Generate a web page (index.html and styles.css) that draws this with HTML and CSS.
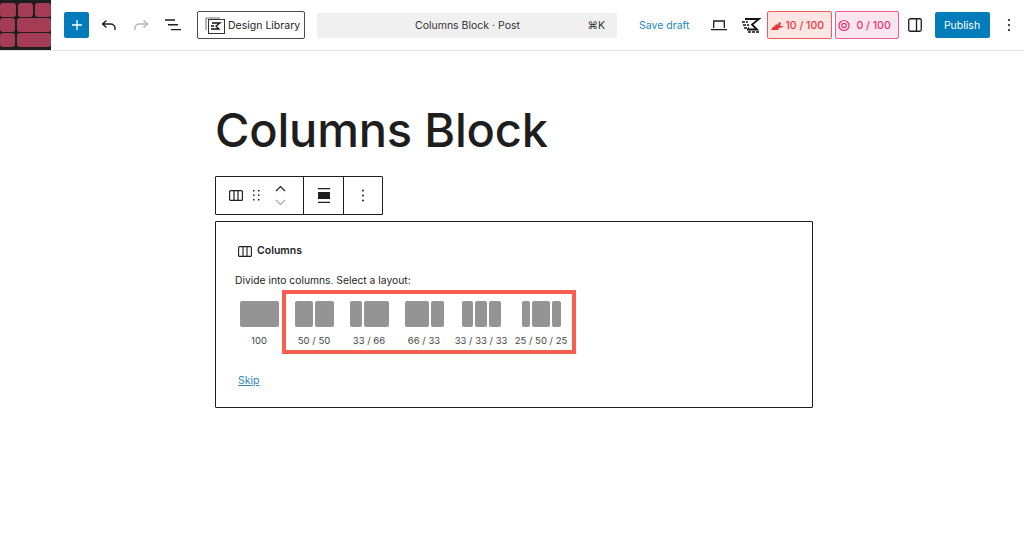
FILE: index.html
```html
<!DOCTYPE html>
<html lang="en">
<head>
  <meta charset="UTF-8">
  <meta name="viewport" content="width=device-width, initial-scale=1.0">
  <title>Columns Block</title>
  <link rel="stylesheet" href="styles.css">
</head>
<body>

  <!-- Top Bar -->
  <header class="topbar">
    <div class="logo">
      <div class="brick-row"><span class="brick"></span><span class="brick"></span><span class="brick"></span></div>
      <div class="brick-row"><span class="brick"></span><span class="brick wide"></span></div>
      <div class="brick-row"><span class="brick"></span><span class="brick wide"></span></div>
    </div>

    <div class="bar-left">
      <button class="add-btn">
        <svg width="12" height="12" viewBox="0 0 12 12"><path d="M6 1v10M1 6h10" stroke="#fff" stroke-width="1.300" fill="none"/></svg>
      </button>
      <svg class="undo" width="18" height="14" viewBox="0 0 18 14"><path d="M6.500 2.500 2.500 6l4 3.500M2.500 6h8c2.500 0 4.500 1.800 4.500 4.300v1.700" stroke="#1e1e1e" stroke-width="1.400" fill="none"/></svg>
      <svg class="redo" width="18" height="14" viewBox="0 0 18 14"><path d="M11.500 2.500 15.500 6l-4 3.500M15.500 6h-8C5 6 3 7.800 3 10.300v1.700" stroke="#b5b5b5" stroke-width="1.400" fill="none"/></svg>
      <svg class="list-view" width="16" height="12" viewBox="0 0 16 12"><path d="M0 1h10M3 5.800h10M6 10.600h10" stroke="#1e1e1e" stroke-width="1.400" fill="none"/></svg>
      <button class="library-btn">
        <svg width="20" height="17" viewBox="0 0 20 17">
          <path d="M1 13V1h14" stroke="#6b6b6b" stroke-width="1" fill="none"/>
          <rect x="3.500" y="2.500" width="16" height="14" fill="#fff" stroke="#333" stroke-width="1"/>
          <path d="M7 6h8l-4 3 3 3H8M6 9h3M6 12h2" stroke="#111" stroke-width="1.300" fill="none"/>
        </svg>
        Design Library
      </button>
    </div>

    <div class="command-bar">
      <span class="command-title">Columns Block · Post</span>
      <span class="command-key">⌘K</span>
    </div>

    <div class="bar-right">
      <a class="save-draft" href="#">Save draft</a>
      <svg class="laptop" width="16" height="11" viewBox="0 0 16 11"><path d="M2.700 8V1h10.600v7M0 9.700h16" stroke="#1e1e1e" stroke-width="1.300" fill="none"/></svg>
      <svg class="speed" width="19" height="17" viewBox="0 0 19 17">
        <path d="M3 2h14l-7 5.500 5 5H5" stroke="#111" stroke-width="1.800" fill="none"/>
        <path d="M0 5h6M1 8h6M2 11h5M6 15h11" stroke="#111" stroke-width="1.500" stroke-dasharray="3 1" fill="none"/>
      </svg>
      <div class="score red">
        <svg width="12" height="9" viewBox="0 0 12 9"><path d="M0 9l2-3 2-1 1-2 2 1 1-3 2 1-1 3h3v1l-4 1-1 2z" fill="#e8363c"/></svg>
        <span>10 / 100</span>
      </div>
      <div class="score pink">
        <svg width="12" height="13" viewBox="0 0 12 13"><circle cx="6" cy="6.500" r="5" stroke="#e8306f" stroke-width="1.200" fill="none"/><circle cx="6" cy="6.500" r="2.200" stroke="#e8306f" stroke-width="1.200" fill="none"/></svg>
        <span>0 / 100</span>
      </div>
      <svg class="sidebar-icon" width="14" height="14" viewBox="0 0 14 14"><rect x="0.750" y="0.750" width="12.500" height="12.500" rx="1.500" stroke="#1e1e1e" stroke-width="1.300" fill="none"/><path d="M8.500 1v12" stroke="#1e1e1e" stroke-width="1.300"/></svg>
      <button class="publish-btn">Publish</button>
      <svg class="more" width="4" height="14" viewBox="0 0 4 14"><circle cx="2" cy="2" r="1.100" fill="#1e1e1e"/><circle cx="2" cy="7" r="1.100" fill="#1e1e1e"/><circle cx="2" cy="12" r="1.100" fill="#1e1e1e"/></svg>
    </div>
  </header>

  <!-- Editor -->
  <main class="editor">
    <h1 class="post-title">Columns Block</h1>

    <div class="block-toolbar">
      <div class="tool-group first">
        <svg width="14" height="11" viewBox="0 0 14 11"><rect x="0.600" y="0.600" width="12.800" height="9.800" rx="1" stroke="#1e1e1e" stroke-width="1.200" fill="none"/><path d="M5 1v9M9 1v9" stroke="#1e1e1e" stroke-width="1.200"/></svg>
        <svg class="drag" width="7" height="11" viewBox="0 0 7 11"><g fill="#1e1e1e"><rect x="0" y="0" width="1.500" height="1.500"/><rect x="5" y="0" width="1.500" height="1.500"/><rect x="0" y="4.500" width="1.500" height="1.500"/><rect x="5" y="4.500" width="1.500" height="1.500"/><rect x="0" y="9" width="1.500" height="1.500"/><rect x="5" y="9" width="1.500" height="1.500"/></g></svg>
        <div class="movers">
          <svg width="11" height="7" viewBox="0 0 11 7"><path d="M1 6l4.500-4.500L10 6" stroke="#1e1e1e" stroke-width="1.200" fill="none"/></svg>
          <svg width="11" height="7" viewBox="0 0 11 7"><path d="M1 1l4.500 4.500L10 1" stroke="#a8a8a8" stroke-width="1.200" fill="none"/></svg>
        </div>
      </div>
      <div class="tool-group align">
        <svg width="12" height="15" viewBox="0 0 12 15"><path d="M0 .7h12M0 14.300h12" stroke="#1e1e1e" stroke-width="1.300"/><rect x="0" y="4" width="12" height="7" fill="#1e1e1e"/></svg>
      </div>
      <div class="tool-group options">
        <svg width="4" height="13" viewBox="0 0 4 13"><circle cx="2" cy="1.500" r="1" fill="#1e1e1e"/><circle cx="2" cy="6.500" r="1" fill="#1e1e1e"/><circle cx="2" cy="11.500" r="1" fill="#1e1e1e"/></svg>
      </div>
    </div>

    <section class="placeholder">
      <div class="placeholder-label">
        <svg width="14" height="11" viewBox="0 0 14 11"><rect x="0.600" y="0.600" width="12.800" height="9.800" rx="1" stroke="#1e1e1e" stroke-width="1.100" fill="none"/><path d="M5 1v9M9 1v9" stroke="#1e1e1e" stroke-width="1.100"/></svg>
        Columns
      </div>
      <p class="placeholder-text">Divide into columns. Select a layout:</p>

      <div class="variations">
        <div class="variation first-var">
          <div class="thumb"><span style="flex: 100"></span></div>
          <div class="var-label">100</div>
        </div>
        <div class="highlight">
          <div class="variation">
            <div class="thumb"><span style="flex: 50"></span><span style="flex: 50"></span></div>
            <div class="var-label">50 / 50</div>
          </div>
          <div class="variation">
            <div class="thumb"><span style="flex: 33"></span><span style="flex: 66"></span></div>
            <div class="var-label">33 / 66</div>
          </div>
          <div class="variation">
            <div class="thumb"><span style="flex: 66"></span><span style="flex: 33"></span></div>
            <div class="var-label">66 / 33</div>
          </div>
          <div class="variation">
            <div class="thumb"><span style="flex: 33"></span><span style="flex: 33"></span><span style="flex: 33"></span></div>
            <div class="var-label">33 / 33 / 33</div>
          </div>
          <div class="variation">
            <div class="thumb"><span style="flex: 25"></span><span style="flex: 50"></span><span style="flex: 25"></span></div>
            <div class="var-label">25 / 50 / 25</div>
          </div>
        </div>
      </div>

      <a class="skip" href="#">Skip</a>
    </section>
  </main>

</body>
</html>
```

FILE: styles.css
```css
body {
  margin: 0;
  padding: 0;
  font-family: 'Inter', 'Liberation Sans', sans-serif;
  background: #fff;
  color: #1e1e1e;
  overflow: hidden;
}

button {
  font-family: inherit;
  cursor: pointer;
}

/* Top Bar */
.topbar {
  display: flex;
  align-items: center;
  height: 50px;
  border-bottom: 1px solid #e4e4e4;
}

.logo {
  width: 51px;
  height: 50px;
  box-sizing: border-box;
  padding-top: 3px;
  background: #1e1e1e;
  flex: none;
  display: flex;
  flex-direction: column;
  gap: 1px;
}

.brick-row {
  display: flex;
  gap: 2px;
  height: 14px;
}

.brick {
  flex: 1;
  background: #a53c55;
  border-radius: 3px;
}

.brick.wide {
  flex: 2.200;
}

.bar-left {
  display: flex;
  align-items: center;
  margin-left: 13px;
  width: 241px;
  flex: none;
}

.add-btn {
  width: 25px;
  height: 26px;
  padding: 0;
  border: none;
  border-radius: 2px;
  background: #007cba;
  display: flex;
  align-items: center;
  justify-content: center;
}

.undo {
  margin-left: 11px;
}

.redo {
  margin-left: 14px;
}

.list-view {
  margin-left: 15px;
}

.library-btn {
  display: flex;
  align-items: center;
  gap: 3px;
  width: 108px;
  height: 28px;
  margin-left: 16px;
  padding: 0 0 0 7px;
  border: 1px solid #4a4a4a;
  border-radius: 2px;
  background: #fff;
  color: #1e1e1e;
  font-size: 10.500px;
  white-space: nowrap;
}

.command-bar {
  width: 300px;
  height: 25px;
  margin-left: 12px;
  box-sizing: border-box;
  padding: 0 12px 0 98px;
  flex: none;
  display: flex;
  align-items: center;
  justify-content: space-between;
  background: #f0f0f0;
  border-radius: 2px;
  font-size: 10.500px;
  color: #333;
}

.bar-right {
  display: flex;
  align-items: center;
  margin-left: 22px;
}

.save-draft {
  color: #1f86c0;
  font-size: 10.500px;
  text-decoration: none;
  white-space: nowrap;
}

.laptop {
  margin-left: 21px;
}

.speed {
  margin-left: 15px;
}

.score {
  display: flex;
  align-items: center;
  height: 28px;
  box-sizing: border-box;
  border-radius: 2px;
  font-size: 10.500px;
  font-weight: 500;
  white-space: nowrap;
}

.score.red {
  width: 65px;
  margin-left: 6px;
  padding-left: 3px;
  gap: 3px;
  background: #fde5e4;
  border: 1px solid #ef5b5b;
  color: #e8363c;
}

.score.pink {
  width: 64px;
  margin-left: 3px;
  padding-left: 2px;
  gap: 7px;
  background: #fbe6ef;
  border: 1px solid #ef5a92;
  color: #e8306f;
}

.sidebar-icon {
  margin-left: 9px;
}

.publish-btn {
  width: 55px;
  height: 26px;
  margin-left: 13px;
  padding: 0;
  border: none;
  border-radius: 2px;
  background: #007cba;
  color: #fff;
  font-size: 10.500px;
}

.more {
  margin-left: 17px;
}

/* Editor */
.editor {
  width: 598px;
  margin: 0 0 0 215px;
}

.post-title {
  margin: 47px 0 0;
  font-size: 47px;
  line-height: 64px;
  font-weight: 500;
  letter-spacing: -0.200px;
  white-space: nowrap;
}

/* Block Toolbar */
.block-toolbar {
  display: flex;
  width: 168px;
  height: 39px;
  margin-top: 14px;
  box-sizing: border-box;
  border: 1px solid #1e1e1e;
  border-radius: 1px;
}

.tool-group {
  display: flex;
  align-items: center;
  justify-content: center;
  border-right: 1px solid #1e1e1e;
}

.tool-group.first {
  width: 88px;
  justify-content: flex-start;
  padding-left: 13px;
  box-sizing: border-box;
}

.drag {
  margin-left: 10px;
}

.movers {
  display: flex;
  flex-direction: column;
  gap: 7px;
  margin-left: 15px;
}

.movers svg {
  display: block;
}

.tool-group.align {
  width: 40px;
  box-sizing: border-box;
}

.tool-group.options {
  flex: 1;
  border-right: none;
}

/* Columns Placeholder */
.placeholder {
  height: 187px;
  margin-top: 6px;
  box-sizing: border-box;
  padding: 22px 19px 0;
  border: 1px solid #1e1e1e;
  border-radius: 1px;
}

.placeholder-label {
  display: flex;
  align-items: center;
  gap: 5px;
  padding-left: 3px;
  font-size: 10.500px;
  font-weight: 600;
  line-height: 14px;
}

.placeholder-text {
  margin: 15px 0 0;
  font-size: 10.300px;
  line-height: 14px;
}

.variations {
  display: flex;
  align-items: flex-start;
  margin-top: 3px;
}

.variation {
  display: flex;
  flex-direction: column;
  align-items: center;
  width: 40px;
}

.first-var {
  margin: 11px 0 0 4px;
}

.thumb {
  display: flex;
  gap: 2px;
  width: 39px;
  height: 26px;
}

.thumb span {
  background: #949494;
  border-radius: 2px;
}

.var-label {
  margin-top: 8px;
  font-size: 9.500px;
  line-height: 12px;
  color: #444;
  white-space: nowrap;
}

.highlight {
  display: flex;
  gap: 15px;
  width: 294px;
  height: 64px;
  margin-left: 3px;
  box-sizing: border-box;
  padding: 7px 0 0 8px;
  border: 4px solid #fb5d50;
}

.highlight .variation:nth-child(4) {
  margin-left: 2px;
}

.highlight .variation:nth-child(5) {
  margin-left: 5px;
}

.skip {
  display: inline-block;
  margin: 20px 0 0 3px;
  color: #2b86bd;
  font-size: 10.500px;
}
```
